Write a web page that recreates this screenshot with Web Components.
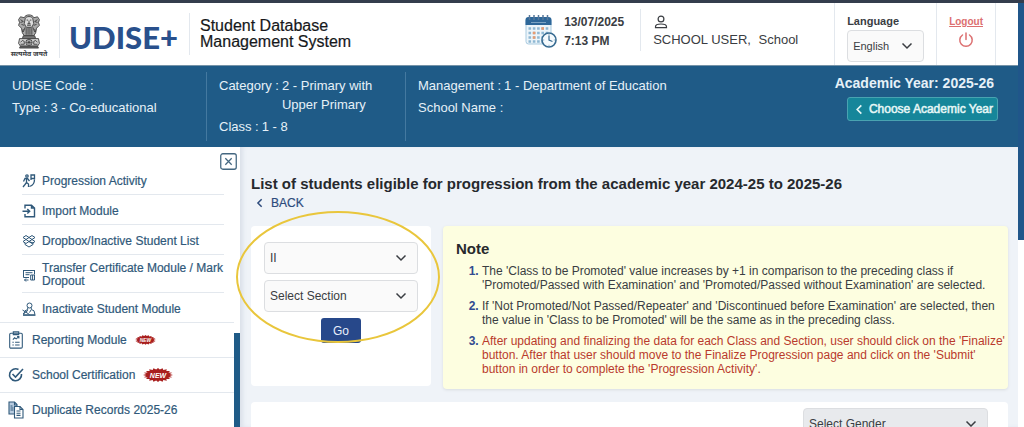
<!DOCTYPE html>
<html lang="en">
<head>
<meta charset="utf-8">
<meta name="viewport" content="width=device-width, initial-scale=1">
<title>Student Database Management System</title>
<style>
	:root {
		--blue: #1f5b87;
		--navy: #27488a;
		--nav-text: #30597a;
		--text: #3a3d42;
		--line: #e3e8ee;
		--page: #eff3f8;
	}

	body {
		margin: 0;
		font: 12px/14px "Liberation Sans", Arial, sans-serif;
		color: var(--text);
		background: #fff;
	}
</style>
</head>
<body>
<udise-app></udise-app>

<script>
const icons = {
	chevron: '<svg viewBox="0 0 12 12" fill="none" stroke="currentColor" stroke-width="1.5"><path d="M1.5 3.5 6 8l4.500-4.500"/></svg>',
	back: '<svg viewBox="0 0 12 12" fill="none" stroke="currentColor" stroke-width="1.800"><path d="M8 1.500 3.500 6 8 10.500"/></svg>',
	close: '<svg viewBox="0 0 16 16" fill="none" stroke="currentColor" stroke-width="1.200"><rect x=".7" y=".7" width="14.600" height="14.600" rx="2"/><path d="m5 5 6 6m0-6-6 6"/></svg>',
	user: '<svg viewBox="0 0 14 14" fill="none" stroke="currentColor" stroke-width="1.200"><circle cx="7" cy="4" r="2.900"/><path d="M1.500 12.700v-1c0-2 2.300-2.700 5.500-2.700s5.500.7 5.500 2.700v1z"/></svg>',
	power: '<svg viewBox="0 0 16 16" fill="none" stroke="currentColor" stroke-width="1.500" stroke-linecap="round"><path d="M8 1v6.500M4.500 3a6.200 6.200 0 1 0 7 0"/></svg>',
	progression: '<svg viewBox="0 0 14 14" fill="none" stroke="currentColor" stroke-width="1.300"><circle cx="5" cy="2" r="1.200"/><path d="M1.500 7.500 3 4.500h2.500L7.500 7M4.500 4.500v4L3 10.500 1 13M4.500 8.500l2 1.500v3M9 1h3.500v3.500H9zM9 1v5M7.500 12.500c3.500-1 5-3 5-7"/></svg>',
	import: '<svg viewBox="0 0 14 14" fill="none" stroke="currentColor" stroke-width="1.400"><path d="M3 4.500V1.200h6.500L12.500 4v8.800H3V10M9.500 1.200V4h3M.5 7.300h7M5.300 5l2.400 2.300-2.400 2.300"/></svg>',
	dropbox: '<svg viewBox="0 0 14 14" fill="none" stroke="currentColor" stroke-width="1"><path d="m4 1.500 3 2-3 2-3-2zM10 1.500l3 2-3 2-3-2zM4 5.500l3 2-3 2-3-2zM10 5.500l3 2-3 2-3-2zM3 9v1.500l4 2.500 4-2.500V9L7 7.500"/></svg>',
	transfer: '<svg viewBox="0 0 14 14" fill="none" stroke="currentColor" stroke-width="1"><path d="M7 9.500H1.500v-7h11v4M1 2.500h12M3.500 4.700h7M3.500 6.700h4M8.700 7h3.800v5H8.700zM10.600 7v5M6.500 12H2.500m1.500-1.500L2.500 12 4 13.500"/></svg>',
	inactive: '<svg viewBox="0 0 14 14" fill="none" stroke="currentColor" stroke-width="1"><circle cx="7.500" cy="3.500" r="2.500"/><path d="M5.700 5.500v2L3 8.800l-1.500 4h11.500l-1-4-2.700-1.300v-2M.5 8l7 4.500M1 12l5-3.700M9 8l-1.500 2.500M1 13.300h12.500"/></svg>',
	report: '<svg viewBox="0 0 16 20" fill="none" stroke="currentColor" stroke-width="1.200"><rect x="1" y="2.500" width="14" height="16.500" rx="1.300"/><path d="M5 1h6v3H5zM4.500 9.500l2-2 1.700 1.200 3-2.500m-2 0h2v2M4 12.500h1.500m1.500 0h5M4 15.500h1.500m1.500 0h5"/></svg>',
	check: '<svg viewBox="0 0 16 16" fill="none" stroke="currentColor" stroke-width="1.600"><path d="M10.500 2.500A6 6 0 1 0 13.500 7M4.500 7l3 3L15 2"/></svg>',
	records: '<svg viewBox="0 0 16 18" stroke="currentColor" stroke-width="1.100"><path fill="#b9cce0" d="M1 1h5.500L9 3.500V13H1z"/><path fill="none" d="M6.500 1v3H9M2.500 5h2m-2 2h3m-3 2h3"/><path fill="#fff" d="M6.500 5.500H12l3 3V17H6.500z"/><path fill="none" d="M12 5.500v3h3M8.500 10h4m-4 2.200h4m-4 2.200h4"/></svg>',
	calendar: `<svg viewBox="0 0 32 34"><rect x="1" y="4" width="25" height="26" rx="2.500" fill="#edf5fa" stroke="#a9cbe0"/><path d="M.5 11V6a3 3 0 0 1 3-3h20a3 3 0 0 1 3 3v5z" fill="#2e6799"/><path d="M4.500 1v5m4.500-5v5m4.500-5v5M18 1v5m4.500-5v5" stroke="#57789b" stroke-width="1.500"/><path d="M6 8.500h15" stroke="#7ba2c3"/><path d="M3.500 14.500h20m-20 4.500h20m-20 4.500h20m-20 4h20" stroke="#8fb8d3" stroke-width="2.600" stroke-dasharray="2.600 1.700"/><path d="M7.800 17.700h2.600v2.600H7.800zm8.600-4.500H19v2.600h-2.600zM7.800 22.200h2.600v2.600H7.800z" fill="#e99b70"/><circle cx="24" cy="26" r="7" fill="#f5fafd" stroke="#376b91" stroke-width="1.600"/><path d="M24 21.500V26l3.500 1.500" fill="none" stroke="#376b91" stroke-width="1.200"/><path d="M24 20.200v1m0 9.600v1M18.200 26h1m9.600 0h1" stroke="#79a0bc"/></svg>`,
	emblem: `<svg viewBox="0 0 26 38" fill="none" stroke="#3b3b3b" stroke-width=".9"><path fill="#aaa" d="M8 5c1-4 9-4 10 0l4-1 2 3-1 3 1 3-3 3-1 5-2 3H8l-2-3-1-5-3-3 1-3-1-3 2-3z"/><path fill="#ddd" d="M9 6c1-3 7-3 8 0l1 5-2 4H10l-2-4z"/><path d="M10.500 7.500h1.500m2 0h1.500M13 8v2.500l-1.500 1h3L13 10.500M11 13h4M4 7l3 2-3 1m18-3-3 2 3 1M5 12l3 1m13-1-3 1M9 15l-2 5m3-4v7m2-8v8m2-8v8m2-7v7m1-8 2 5M7 17l-1 3m13-3 1 3"/><path fill="#777" d="M7 24h12l1 3H6z"/><path fill="#ccc" d="M3 27h20l1 5-2 3H4l-2-3z"/><circle cx="13" cy="31" r="3.300" fill="#eee"/><path d="M13 27.700v6.600M9.700 31h6.600M10.700 28.700l4.600 4.600m0-4.600-4.600 4.600M4 31l2-2 2 1v3M22 31l-2-2-2 1v3M4 33h4m10 0h4"/><path fill="#666" d="M4 35h18l1 2H3z"/></svg>`
};

// gives each element an open shadow root with its own markup
class BaseElement extends HTMLElement {
	constructor() {
		super();
		this.attachShadow({ mode: 'open' });
	}

	connectedCallback() {
		this.shadowRoot.innerHTML = this.render();
	}
}

customElements.define('ui-icon', class extends BaseElement {
	render() {
		return `
			<style>
			:host { display: block; flex: none; width: var(--w, 14px); height: var(--h, 14px); }
			svg { display: block; width: 100%; height: 100%; }
			</style>
			${icons[this.getAttribute('name')]}
		`;
	}
});

customElements.define('drop-down', class extends BaseElement {
	render() {
		const label = this.getAttribute('label');
		const visible = this.hasAttribute('show-label');
		return `
			<style>
			:host { display: block; }
			label {
				display: block;
				font-size: 11px;
				font-weight: bold;
				line-height: 13px;
				padding-bottom: 2px;
			}
			.box { display: grid; align-items: center; }
			select, ui-icon { grid-area: 1 / 1; }
			select {
				appearance: none;
				width: 100%;
				height: 32px;
				margin: 0;
				padding: 0 24px 0 5px;
				font: inherit;
				color: inherit;
				background: var(--select-bg, #fafafa);
				border: 1px solid #dcdee1;
				border-radius: 4px;
			}
			ui-icon {
				--w: 12px;
				--h: 12px;
				justify-self: end;
				margin-right: 11px;
				pointer-events: none;
			}
			</style>
			${visible ? `<label for="field">${label}</label>` : ''}
			<div class="box">
				<select id="field" ${visible ? '' : `aria-label="${label}"`}>
					<option>${this.getAttribute('value')}</option>
				</select>
				<ui-icon name="chevron"></ui-icon>
			</div>
		`;
	}
});

customElements.define('app-header', class extends BaseElement {
	render() {
		return `
			<style>
			:host {
				display: flex;
				height: 62px;
				background: #fff;
			}
			.emblem {
				display: flex;
				flex-direction: column;
				align-items: center;
				gap: 1px;
				width: 48px;
				padding: 10px 0 0 5px;
				margin-right: 6px;
				font: bold 7px/9px "Noto Sans Devanagari", "Noto Sans", sans-serif;
				white-space: nowrap;
			}
			.emblem ui-icon { --w: 26px; --h: 36px; }
			.brand, .title {
				display: flex;
				align-items: center;
				height: 42px;
				margin-top: 13px;
				border-left: 1px solid var(--line);
			}
			.brand {
				width: 120px;
				padding-left: 9px;
				font: 900 31px/42px Lato, sans-serif;
				color: #29508c;
			}
			.title {
				font-size: 16px;
				line-height: 16px;
				padding-left: 10px;
				margin-top: 10px;
				color: #16181b;
				-webkit-text-stroke: 0.2px;
			}
			.tools { display: flex; margin-left: auto; padding-right: 22px; }
			.when {
				display: flex;
				gap: 7px;
				width: 115px;
				padding-top: 10px;
				font-weight: bold;
				line-height: 19px;
			}
			.when ui-icon { --w: 32px; --h: 34px; margin-top: 1px; }
			.who {
				width: 181px;
				height: 42px;
				margin-top: 6px;
				padding-left: 12px;
				border-left: 1px solid var(--line);
				font-size: 13px;
				line-height: 18px;
			}
			.who ui-icon { margin: 6px 0 2px 1px; }
			.who span { margin-left: 4px; }
			.language, .logout { padding: 12px 12px 0; border-left: 1px solid var(--line); }
			.language { width: 77px; padding-bottom: 3px; }
			.language drop-down { font-size: 11px; }
			.logout { border-right: 1px solid var(--line); }
			a {
				display: flex;
				flex-direction: column;
				align-items: center;
				gap: 4px;
				font-size: 10px;
				line-height: 13px;
				font-weight: bold;
				color: #dc6f70;
			}
			a ui-icon { --w: 16px; --h: 16px; }
			</style>
			<div class="emblem" lang="hi"><ui-icon name="emblem"></ui-icon>सत्यमेव जयते</div>
			<div class="brand">UDISE+</div>
			<div class="title">Student Database<br>Management System</div>
			<div class="tools">
				<div class="when">
					<ui-icon name="calendar"></ui-icon>
					<div>13/07/2025<br>7:13 PM</div>
				</div>
				<div class="who">
					<ui-icon name="user"></ui-icon>
					SCHOOL USER, <span>School</span>
				</div>
				<div class="language">
					<drop-down label="Language" value="English" show-label></drop-down>
				</div>
				<div class="logout"><a href="#logout">Logout<ui-icon name="power"></ui-icon></a></div>
			</div>
		`;
	}
});

customElements.define('info-row', class extends BaseElement {
	render() {
		return `
			<style>
			:host { display: flex; gap: 3px; line-height: 19px; margin-bottom: 3px; }
			.name { flex: none; }
			</style>
			<span class="name">${this.getAttribute('name')} :</span>
			<span><slot></slot></span>
		`;
	}
});

customElements.define('school-band', class extends BaseElement {
	render() {
		return `
			<style>
			:host {
				display: grid;
				grid-template-columns: 206px 199px 1fr auto;
				background: var(--blue);
				color: #e6f1f8;
				font-size: 13px;
				border-top: 1px solid #7593a8;
			}
			.col { padding: 4px 0 2px 12px; margin: 6px 0; }
			.col:first-child { padding-left: 10px; }
			.col + .col { border-left: 1px solid #4479a0; }
			.year {
				display: flex;
				flex-direction: column;
				align-items: flex-end;
				gap: 5px;
				padding: 8px 20px 0 0;
				font-size: 14px;
				line-height: 18px;
				font-weight: bold;
			}
			.year span { padding-right: 4px; }
			button {
				display: flex;
				align-items: center;
				gap: 4px;
				height: 24px;
				margin: 0;
				padding: 0 4px 0 6px;
				font: 12px/14px "Liberation Sans", Arial, sans-serif;
				-webkit-text-stroke: 0.5px;
				color: #e6f7f6;
				background: #16869a;
				border: 1px solid #49a3b1;
				border-radius: 3px;
			}
			button ui-icon { --w: 11px; --h: 11px; }
			</style>
			<div class="col">
				<info-row name="UDISE Code"></info-row>
				<info-row name="Type">3 - Co-educational</info-row>
			</div>
			<div class="col">
				<info-row name="Category">2 - Primary with<br>Upper Primary</info-row>
				<info-row name="Class">1 - 8</info-row>
			</div>
			<div class="col">
				<info-row name="Management">1 - Department of Education</info-row>
				<info-row name="School Name"></info-row>
			</div>
			<div class="year">
				<span>Academic Year: 2025-26</span>
				<button type="button"><ui-icon name="back"></ui-icon>Choose Academic Year</button>
			</div>
		`;
	}
});

customElements.define('nav-item', class extends BaseElement {
	render() {
		return `
			<style>
			:host { display: block; border-bottom: 1px solid var(--line); }
			:host([sub]) { margin: 0 10px 0 22px; }
			:host([last-sub]) { border-bottom: 0; }
			a {
				display: flex;
				align-items: center;
				gap: 8px;
				box-sizing: border-box;
				min-height: 34px;
				padding-left: 8px;
				line-height: 13px;
				color: var(--nav-text);
				text-decoration: none;
				-webkit-text-stroke: 0.2px;
			}
			ui-icon { --w: 16px; --h: 18px; }
			:host([sub]) a { gap: 6px; min-height: 29px; padding: 3px 0 0; }
			:host([tall]) a { min-height: 37px; }
			:host([sub]) ui-icon { --w: 14px; --h: 14px; }
			</style>
			<a href="#${this.getAttribute('icon')}">
				<ui-icon name="${this.getAttribute('icon')}"></ui-icon>
				<slot></slot>
			</a>
		`;
	}
});

// red starburst with the word NEW in it
customElements.define('new-badge', class extends BaseElement {
	render() {
		const points = [];
		for (let i = 0; i < 40; i++) {
			const r = i % 2 ? 0.78 : 1;
			const a = i * Math.PI / 20;
			points.push((15 + 15 * r * Math.cos(a)).toFixed(1) + ',' + (7 + 7 * r * Math.sin(a)).toFixed(1));
		}
		return `
			<style>
			:host { display: block; width: 30px; }
			:host([small]) { width: 21px; }
			svg { display: block; width: 100%; }
			text { font: bold italic 7px "Liberation Sans", Arial, sans-serif; }
			</style>
			<svg viewBox="0 0 30 14">
				<polygon points="${points.join(' ')}" fill="#a91f1e"/>
				<text x="15" y="9.500" text-anchor="middle" fill="#fff">NEW</text>
			</svg>
		`;
	}
});

customElements.define('side-nav', class extends BaseElement {
	render() {
		return `
			<style>
			:host {
				display: flex;
				background: #fff;
				overflow: hidden;
			}
			nav { flex: 1; }
			.bar { width: 6px; padding-top: 186px; }
			.thumb { height: 100%; background: var(--blue); }
			.top {
				display: flex;
				justify-content: flex-end;
				height: 12px;
				padding-top: 6px;
				margin-right: -3px;
			}
			button {
				width: 17px;
				height: 17px;
				padding: 0;
				border: 0;
				background: none;
				color: #446780;
			}
			button ui-icon { --w: 17px; --h: 17px; }
			.group { border-bottom: 1px solid var(--line); }
			</style>
			<nav>
				<div class="top"><button type="button" aria-label="Close menu"><ui-icon name="close"></ui-icon></button></div>
				<div class="group">
					<nav-item sub icon="progression">Progression Activity</nav-item>
					<nav-item sub icon="import">Import Module</nav-item>
					<nav-item sub icon="dropbox">Dropbox/Inactive Student List</nav-item>
					<nav-item sub tall icon="transfer">Transfer Certificate Module / Mark Dropout</nav-item>
					<nav-item sub last-sub icon="inactive">Inactivate Student Module</nav-item>
				</div>
				<nav-item icon="report">Reporting Module <new-badge small></new-badge></nav-item>
				<nav-item icon="check">School Certification <new-badge></new-badge></nav-item>
				<nav-item icon="records">Duplicate Records 2025-26</nav-item>
			</nav>
			<div class="bar"><div class="thumb"></div></div>
		`;
	}
});

customElements.define('class-filter', class extends BaseElement {
	render() {
		return `
			<style>
			:host {
				display: block;
				position: relative;
				min-height: 128px;
				padding: 16px 13px;
				background: #fff;
				border-radius: 4px;
			}
			form { display: grid; gap: 6px; }
			button {
				justify-self: center;
				width: 40px;
				height: 25px;
				padding: 0;
				font: inherit;
				color: #e9f0fa;
				background: var(--navy);
				border: 0;
				border-radius: 3px;
			}
			/* hand-drawn style highlight lying over the form */
			.ring {
				position: absolute;
				left: -15px;
				top: -15px;
				width: 204px;
				height: 132px;
				box-sizing: border-box;
				border: 2px solid #e9c63c;
				border-radius: 50%;
				pointer-events: none;
			}
			</style>
			<form>
				<drop-down label="Class" value="II"></drop-down>
				<drop-down label="Section" value="Select Section"></drop-down>
				<button type="button">Go</button>
			</form>
			<div class="ring"></div>
		`;
	}
});

customElements.define('note-box', class extends BaseElement {
	render() {
		return `
			<style>
			:host {
				display: block;
				padding: 14px 0 13px 13px;
				background: #fdfee0;
				border-radius: 4px;
				box-shadow: 0 1px 3px #d9dde0;
			}
			h2 { margin: 0 0 7px; font-size: 15px; line-height: 17px; color: #27292c; }
			ol { margin: 0; padding-left: 26px; }
			::slotted(li) { margin-bottom: 7px; }
			::slotted(li:last-child) { margin-bottom: 0; color: #b93a2c; }
			</style>
			<h2>Note</h2>
			<ol><slot></slot></ol>
		`;
	}
});

customElements.define('progression-page', class extends BaseElement {
	render() {
		return `
			<style>
			:host {
				display: block;
				padding: 28px 10px 0 11px;
				background: var(--page);
				box-shadow: inset 4px 0 4px -1px #dbe1ea;
			}
			h1 { margin: 0; font-size: 15px; line-height: 18px; color: #26292d; }
			.back {
				display: flex;
				align-items: center;
				gap: 6px;
				width: max-content;
				padding: 2px 0 2px 4px;
				line-height: 16px;
				color: #2d4b7c;
				text-decoration: none;
				-webkit-text-stroke: 0.2px;
			}
			.back ui-icon { --w: 10px; --h: 10px; }
			.cards { display: grid; grid-template-columns: 180px 1fr; gap: 12px; align-items: start; margin-top: 13px; }
			li::marker { font-weight: bold; color: #324b8f; }
			.list {
				display: flex;
				justify-content: flex-end;
				min-height: 60px;
				margin-top: 13px;
				padding: 6px 20px;
				background: #fff;
				border-radius: 4px;
			}
			.list drop-down { width: 185px; --select-bg: #e8eaed; }
			</style>
			<h1>List of students eligible for progression from the academic year 2024-25 to 2025-26</h1>
			<a class="back" href="#back"><ui-icon name="back"></ui-icon>BACK</a>
			<div class="cards">
				<class-filter></class-filter>
				<note-box>
					<li>The 'Class to be Promoted' value increases by +1 in comparison to the preceding class if<br>'Promoted/Passed with Examination' and 'Promoted/Passed without Examination' are selected.</li>
					<li>If 'Not Promoted/Not Passed/Repeater' and 'Discontinued before Examination' are selected, then<br>the value in 'Class to be Promoted' will be the same as in the preceding class.</li>
					<li>After updating and finalizing the data for each Class and Section, user should click on the 'Finalize'<br>button. After that user should move to the Finalize Progression page and click on the 'Submit'<br>button in order to complete the 'Progression Activity'.</li>
				</note-box>
			</div>
			<div class="list"><drop-down label="Gender" value="Select Gender"></drop-down></div>
		`;
	}
});

customElements.define('udise-app', class extends BaseElement {
	render() {
		return `
			<style>
			:host {
				display: grid;
				grid-template: 3px auto auto minmax(0, 1fr) / 240px 1fr 6px;
				height: 100vh;
				overflow: hidden;
			}
			.strip { grid-column: 1 / -1; background: #343d4d; }
			app-header, school-band { grid-column: 1 / 3; }
			side-nav, progression-page { min-height: 0; }
			.scroll { grid-area: 2 / 3 / 5 / 4; background: #fff; }
			.thumb { height: 56%; background: #20568a; }
			</style>
			<div class="strip"></div>
			<app-header></app-header>
			<school-band></school-band>
			<side-nav></side-nav>
			<progression-page></progression-page>
			<div class="scroll"><div class="thumb"></div></div>
		`;
	}
});
</script>
</body>
</html>
